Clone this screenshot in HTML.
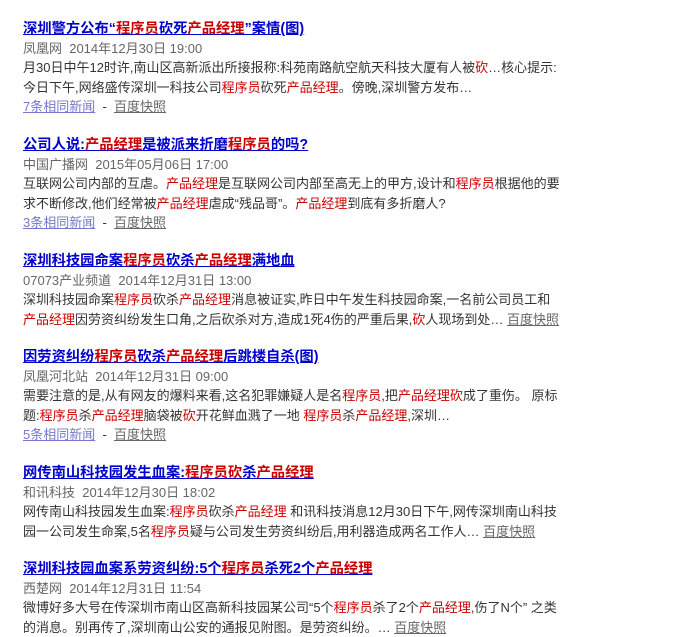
<!DOCTYPE html>
<html><head><meta charset="utf-8"><style>
body{margin:0;background:#fff;font-family:"Liberation Sans","Noto Sans CJK SC",sans-serif;width:675px;height:629px;overflow:hidden;position:relative}
.b{position:absolute;left:23px;white-space:nowrap}
.t{font-size:14.3px;font-weight:bold;color:#00c;text-decoration:underline;line-height:20px;height:20px}
.m{font-size:13px;color:#666;line-height:19px}
.a{font-size:13px;color:#333;line-height:19.5px}
em{font-style:normal;color:#c00}
.l{color:#77c;text-decoration:underline}
.k{color:#666;text-decoration:underline}
</style></head><body>
<div class="b" style="top:19px">
<div class="t">深圳警方公布“<em>程序员</em>砍死<em>产品经理</em>”案情(图)</div>
<div class="m">凤凰网&nbsp; 2014年12月30日 19:00</div>
<div class="a">月30日中午12时许,南山区高新派出所接报称:科苑南路航空航天科技大厦有人被<em>砍</em>…核心提示:<br>今日下午,网络盛传深圳一科技公司<em>程序员</em>砍死<em>产品经理</em>。傍晚,深圳警方发布…<br><span class="l">7条相同新闻</span> &nbsp;- &nbsp;<span class="k">百度快照</span></div>
</div>
<div class="b" style="top:135px">
<div class="t">公司人说:<em>产品经理</em>是被派来折磨<em>程序员</em>的吗?</div>
<div class="m">中国广播网&nbsp; 2015年05月06日 17:00</div>
<div class="a">互联网公司内部的互虐。<em>产品经理</em>是互联网公司内部至高无上的甲方,设计和<em>程序员</em>根据他的要<br>求不断修改,他们经常被<em>产品经理</em>虐成“残品哥”。<em>产品经理</em>到底有多折磨人?<br><span class="l">3条相同新闻</span> &nbsp;- &nbsp;<span class="k">百度快照</span></div>
</div>
<div class="b" style="top:251px">
<div class="t">深圳科技园命案<em>程序员</em>砍杀<em>产品经理</em>满地血</div>
<div class="m">07073产业频道&nbsp; 2014年12月31日 13:00</div>
<div class="a">深圳科技园命案<em>程序员</em>砍杀<em>产品经理</em>消息被证实,昨日中午发生科技园命案,一名前公司员工和<br><em>产品经理</em>因劳资纠纷发生口角,之后砍杀对方,造成1死4伤的严重后果,<em>砍</em>人现场到处… <span class="k">百度快照</span></div>
</div>
<div class="b" style="top:347px">
<div class="t">因劳资纠纷<em>程序员</em>砍杀<em>产品经理</em>后跳楼自杀(图)</div>
<div class="m">凤凰河北站&nbsp; 2014年12月31日 09:00</div>
<div class="a">需要注意的是,从有网友的爆料来看,这名犯罪嫌疑人是名<em>程序员</em>,把<em>产品经理砍</em>成了重伤。 原标<br>题:<em>程序员</em>杀<em>产品经理</em>脑袋被<em>砍</em>开花鲜血溅了一地 <em>程序员</em>杀<em>产品经理</em>,深圳…<br><span class="l">5条相同新闻</span> &nbsp;- &nbsp;<span class="k">百度快照</span></div>
</div>
<div class="b" style="top:463px">
<div class="t">网传南山科技园发生血案:<em>程序员砍</em>杀<em>产品经理</em></div>
<div class="m">和讯科技&nbsp; 2014年12月30日 18:02</div>
<div class="a">网传南山科技园发生血案:<em>程序员</em>砍杀<em>产品经理</em> 和讯科技消息12月30日下午,网传深圳南山科技<br>园一公司发生命案,5名<em>程序员</em>疑与公司发生劳资纠纷后,用利器造成两名工作人… <span class="k">百度快照</span></div>
</div>
<div class="b" style="top:559px">
<div class="t">深圳科技园血案系劳资纠纷:5个<em>程序员</em>杀死2个<em>产品经理</em></div>
<div class="m">西楚网&nbsp; 2014年12月31日 11:54</div>
<div class="a">微博好多大号在传深圳市南山区高新科技园某公司“5个<em>程序员</em>杀了2个<em>产品经理</em>,伤了N个” 之类<br>的消息。别再传了,深圳南山公安的通报见附图。是劳资纠纷。… <span class="k">百度快照</span></div>
</div>
</body></html>
